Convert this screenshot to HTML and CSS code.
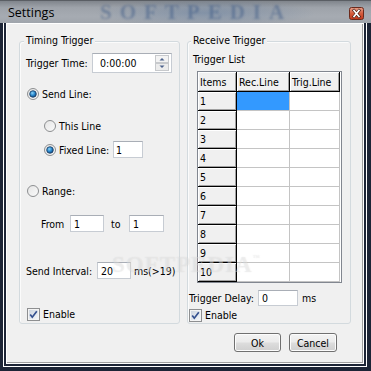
FILE: index.html
```html
<!DOCTYPE html>
<html>
<head>
<meta charset="utf-8">
<title>Settings</title>
<link rel="stylesheet" href="styles.css">
</head>
<body>
<svg class="defs" width="0" height="0" aria-hidden="true">
  <defs>
    <linearGradient id="radioFill" x1="0" y1="0" x2="1" y2="1">
      <stop offset="0" stop-color="#e4e4e4"/>
      <stop offset="1" stop-color="#fbfbfb"/>
    </linearGradient>
    <radialGradient id="dotFill" cx="0.4" cy="0.35" r="0.7">
      <stop offset="0" stop-color="#8fd3f7"/>
      <stop offset="0.5" stop-color="#2a8bd0"/>
      <stop offset="1" stop-color="#0d3f78"/>
    </radialGradient>
    <linearGradient id="boxFill" x1="0" y1="0" x2="1" y2="1">
      <stop offset="0" stop-color="#cdd5e0"/>
      <stop offset="1" stop-color="#f4f6f9"/>
    </linearGradient>
    <linearGradient id="closeFill" x1="0" y1="0" x2="0" y2="1">
      <stop offset="0" stop-color="#e8a18c"/>
      <stop offset="0.5" stop-color="#d35b3c"/>
      <stop offset="1" stop-color="#c2371b"/>
    </linearGradient>
  </defs>
</svg>
<div class="window">
  <div class="titlebar">
    <span class="title">Settings</span>
    <span class="wm-title" aria-hidden="true">SOFTPEDIA</span>
    <span class="close">
      <svg width="15" height="13" viewBox="0 0 15 13">
        <rect x="0.5" y="0.5" width="14" height="12" rx="2" fill="url(#closeFill)" stroke="#6b2a1c"/>
        <path d="M5 3.5 L10 9.5 M10 3.5 L5 9.5" stroke="#4a2218" stroke-width="3" stroke-linecap="square"/>
        <path d="M5 3.5 L10 9.5 M10 3.5 L5 9.5" stroke="#ffffff" stroke-width="1.6" stroke-linecap="square"/>
      </svg>
    </span>
  </div>
  <div class="f1">
    <div class="f2">
      <div class="client">
        <div class="groups">
          <div class="group group-left">
            <span class="legend">Timing Trigger</span>
            <div class="row r-time">
              <span class="lbl-time">Trigger Time:</span>
              <div class="input in-time">0:00:00
                <span class="spin">
                  <svg width="14" height="16" viewBox="0 0 14 16">
                    <rect x="0.5" y="0.5" width="13" height="7" fill="#f3f3f3" stroke="#c7c9cc"/>
                    <rect x="0.5" y="8.5" width="13" height="7" fill="#ececec" stroke="#c7c9cc"/>
                    <path d="M4.5 5.5 L7 3 L9.5 5.5 Z" fill="#4d628c"/>
                    <path d="M4.5 10.5 L7 13 L9.5 10.5 Z" fill="#4d628c"/>
                  </svg>
                </span>
              </div>
            </div>
            <div class="row r-send">
              <svg class="radio" width="12" height="12" viewBox="0 0 12 12"><circle cx="6" cy="6" r="5.5" fill="url(#radioFill)" stroke="#8c8e90"/><circle cx="6" cy="6" r="3.3" fill="url(#dotFill)" stroke="#1b3a5e" stroke-width="0.8"/></svg>
              <span>Send Line:</span>
            </div>
            <div class="row r-this">
              <svg class="radio" width="12" height="12" viewBox="0 0 12 12"><circle cx="6" cy="6" r="5.5" fill="url(#radioFill)" stroke="#8c8e90"/></svg>
              <span>This Line</span>
            </div>
            <div class="row r-fixed">
              <svg class="radio" width="12" height="12" viewBox="0 0 12 12"><circle cx="6" cy="6" r="5.5" fill="url(#radioFill)" stroke="#8c8e90"/><circle cx="6" cy="6" r="3.3" fill="url(#dotFill)" stroke="#1b3a5e" stroke-width="0.8"/></svg>
              <span class="lbl-fixed">Fixed Line:</span>
              <div class="input in-fixed">1</div>
            </div>
            <div class="row r-range">
              <svg class="radio" width="12" height="12" viewBox="0 0 12 12"><circle cx="6" cy="6" r="5.5" fill="url(#radioFill)" stroke="#8c8e90"/></svg>
              <span>Range:</span>
            </div>
            <div class="row r-from">
              <span class="lbl-from">From</span>
              <div class="input in-from">1</div>
              <span class="lbl-to">to</span>
              <div class="input in-to">1</div>
            </div>
            <div class="row r-interval">
              <span class="lbl-interval">Send Interval:</span>
              <div class="input in-interval">20</div>
              <span class="unit">ms(&gt;19)</span>
            </div>
            <div class="row r-enable">
              <svg class="check" width="13" height="13" viewBox="0 0 13 13"><rect x="0.5" y="0.5" width="12" height="12" fill="#f4f4f4" stroke="#8e8f91"/><rect x="2" y="2" width="9" height="9" fill="url(#boxFill)"/><path d="M3.2 6.4 L5.3 9.2 L9.8 3.2" fill="none" stroke="#34508f" stroke-width="1.7"/></svg>
              <span>Enable</span>
            </div>
          </div>
          <div class="group group-right">
            <span class="legend">Receive Trigger</span>
            <div class="list-label">Trigger List</div>
            <div class="grid-wrap">
              <div class="grid">
                <div class="hc">Items</div><div class="hc">Rec.Line</div><div class="hc">Trig.Line</div>
                <div class="hc">1</div><div class="dc sel"></div><div class="dc"></div>
                <div class="hc">2</div><div class="dc"></div><div class="dc"></div>
                <div class="hc">3</div><div class="dc"></div><div class="dc"></div>
                <div class="hc">4</div><div class="dc"></div><div class="dc"></div>
                <div class="hc">5</div><div class="dc"></div><div class="dc"></div>
                <div class="hc">6</div><div class="dc"></div><div class="dc"></div>
                <div class="hc">7</div><div class="dc"></div><div class="dc"></div>
                <div class="hc">8</div><div class="dc"></div><div class="dc"></div>
                <div class="hc">9</div><div class="dc"></div><div class="dc"></div>
                <div class="hc">10</div><div class="dc"></div><div class="dc"></div>
              </div>
            </div>
            <div class="row r-delay">
              <span class="lbl-delay">Trigger Delay:</span>
              <div class="input in-delay">0</div>
              <span class="unit2">ms</span>
            </div>
            <div class="row r-enable2">
              <svg class="check" width="13" height="13" viewBox="0 0 13 13"><rect x="0.5" y="0.5" width="12" height="12" fill="#f4f4f4" stroke="#8e8f91"/><rect x="2" y="2" width="9" height="9" fill="url(#boxFill)"/><path d="M3.2 6.4 L5.3 9.2 L9.8 3.2" fill="none" stroke="#34508f" stroke-width="1.7"/></svg>
              <span>Enable</span>
            </div>
          </div>
        </div>
        <div class="buttons">
          <div class="btn btn-ok">Ok</div>
          <div class="btn btn-cancel">Cancel</div>
        </div>
      </div>
    </div>
  </div>
  <div class="wm-body" aria-hidden="true">SOFTPEDIA<sup>™</sup></div>
</div>
</body>
</html>
```
FILE: styles.css
```css
* { box-sizing: border-box; }
html, body { margin: 0; padding: 0; }
body {
  width: 371px;
  height: 371px;
  overflow: hidden;
  font-family: "DejaVu Sans Condensed", "DejaVu Sans", sans-serif;
  font-size: 10.5px;
  color: #000;
  background: #1d2536;
}
.defs { position: absolute; width: 0; height: 0; }
.window {
  position: relative;
  width: 371px;
  height: 371px;
  display: flex;
  flex-direction: column;
  background: #1d2536;
}
.titlebar {
  position: relative;
  height: 23px;
  flex: none;
  display: flex;
  align-items: center;
  padding-left: 8px;
  background:
    radial-gradient(ellipse 110px 14px at 205px 12px, rgba(70, 105, 150, 0.35), rgba(70, 105, 150, 0) 100%),
    linear-gradient(#80858c, #9ea3aa 30%, #a6abb2 70%, #a0a5ac);
  border-top: 1px solid #5a5e64;
}
.title {
  font-family: "Open Sans", sans-serif;
  font-size: 12.5px;
  color: #000;
  position: relative;
  z-index: 1;
}
.wm-title {
  position: absolute;
  left: 100px;
  top: 0;
  line-height: 22px;
  font-family: "Liberation Serif", serif;
  font-weight: bold;
  font-size: 21px;
  letter-spacing: 8px;
  color: rgba(50, 82, 128, 0.42);
  filter: blur(1px);
}
.close {
  position: relative;
  z-index: 1;
  margin-left: auto;
  margin-right: 7px;
  align-self: flex-start;
  margin-top: 6px;
  width: 15px;
  height: 13px;
  display: flex;
}
.f1 { flex: 1; display: flex; padding: 0 4px 4px 3px; }
.f2 { flex: 1; display: flex; border: 1px solid #fff; border-top: 0; padding: 0 2px 2px; }
.client {
  flex: 1;
  display: flex;
  flex-direction: column;
  border: 1px solid #fff;
  background: #f0f0f0;
  box-shadow: inset -1px -1px 0 #a0a0a0;
}
.groups {
  display: flex;
  gap: 7px;
  margin: 17px 12px 0;
  height: 283px;
  flex: none;
}
.group {
  display: flex;
  flex-direction: column;
  border: 1px solid #d3dade;
  border-radius: 3px;
  box-shadow: inset 1px 1px 0 #fbfbfb;
}
.group-left { width: 161px; padding-left: 6px; }
.group-right { width: 164px; padding-left: 5px; }
.legend {
  align-self: flex-start;
  margin-top: -8px;
  margin-left: -2px;
  padding: 0 2px;
  line-height: 13px;
  background: #f0f0f0;
}
.row { display: flex; align-items: center; flex: none; white-space: nowrap; }
.input {
  height: 100%;
  display: flex;
  align-items: center;
  background: #fff;
  border: 1px solid #c7ccd3;
  border-top-color: #a9aeb6;
  padding-left: 3px;
}
.radio { flex: none; margin-left: 1px; margin-right: 3px; }
.check { flex: none; margin-left: 1px; margin-right: 3px; }

.r-time { height: 20px; margin-top: 6px; }
.lbl-time { width: 66px; }
.in-time { width: 80px; padding-left: 7px; position: relative; }
.spin { margin-left: auto; margin-right: 2px; display: flex; }

.r-send { height: 14px; margin-top: 14px; }
.r-this { height: 14px; margin-top: 18px; padding-left: 17px; }
.r-fixed { height: 17px; margin-top: 8px; padding-left: 17px; }
.lbl-fixed { width: 54px; }
.in-fixed { width: 30px; padding-left: 2px; }
.r-range { height: 14px; margin-top: 26px; }
.r-from { height: 17px; margin-top: 17px; padding-left: 15px; }
.lbl-from { width: 29px; }
.in-from { width: 34px; }
.lbl-to { margin-left: 7px; width: 18px; }
.in-to { width: 35px; }
.r-interval { height: 17px; margin-top: 30px; }
.lbl-interval { width: 71px; }
.in-interval { width: 34px; }
.unit { margin-left: 3px; }
.r-enable { height: 14px; margin-top: 28px; }

.list-label { margin-top: 6px; line-height: 13px; }
.grid-wrap {
  margin-top: 5px;
  margin-left: 4px;
  width: 145px;
  border: 1px solid #828790;
  background: #fff;
  flex: none;
}
.grid {
  display: grid;
  grid-template-columns: 39px 53px 50px;
  grid-template-rows: 20px repeat(10, 19px);
}
.hc {
  display: flex;
  align-items: center;
  padding-left: 2px;
  background: #f0f0f0;
  border-right: 1px solid #000;
  border-bottom: 1px solid #000;
  box-shadow: inset 1px 1px 0 #fff, inset -1px -1px 0 #a0a0a0;
}
.dc {
  background: #fff;
  border-right: 1px solid #c4c4c4;
  border-bottom: 1px solid #c4c4c4;
}
.dc.sel { background: #3399ff; }
.r-delay { height: 16px; margin-top: 7px; margin-left: -4px; }
.lbl-delay { width: 69px; }
.in-delay { width: 40px; }
.unit2 { margin-left: 4px; }
.r-enable2 { height: 14px; margin-top: 2px; margin-left: -5px; }

.buttons {
  display: flex;
  justify-content: flex-end;
  gap: 8px;
  margin-top: 9px;
  padding-right: 26px;
}
.btn {
  height: 19px;
  display: flex;
  align-items: center;
  justify-content: center;
  border: 1px solid #707070;
  border-radius: 3px;
  background: linear-gradient(#f3f3f3 0%, #ebebeb 48%, #dddddd 52%, #cfcfcf 100%);
  box-shadow: inset 0 0 0 1px #fcfcfc;
}
.btn-ok { width: 47px; }
.btn-cancel { width: 48px; }

.wm-body {
  position: absolute;
  left: 112px;
  top: 252px;
  font-family: "Liberation Serif", serif;
  font-weight: bold;
  font-size: 23px;
  letter-spacing: 1px;
  color: rgba(255, 255, 255, 0.3);
  text-shadow: 0 0 1px rgba(150, 150, 150, 0.25);
  pointer-events: none;
}
.wm-body sup { font-size: 7px; vertical-align: 12px; }
```
